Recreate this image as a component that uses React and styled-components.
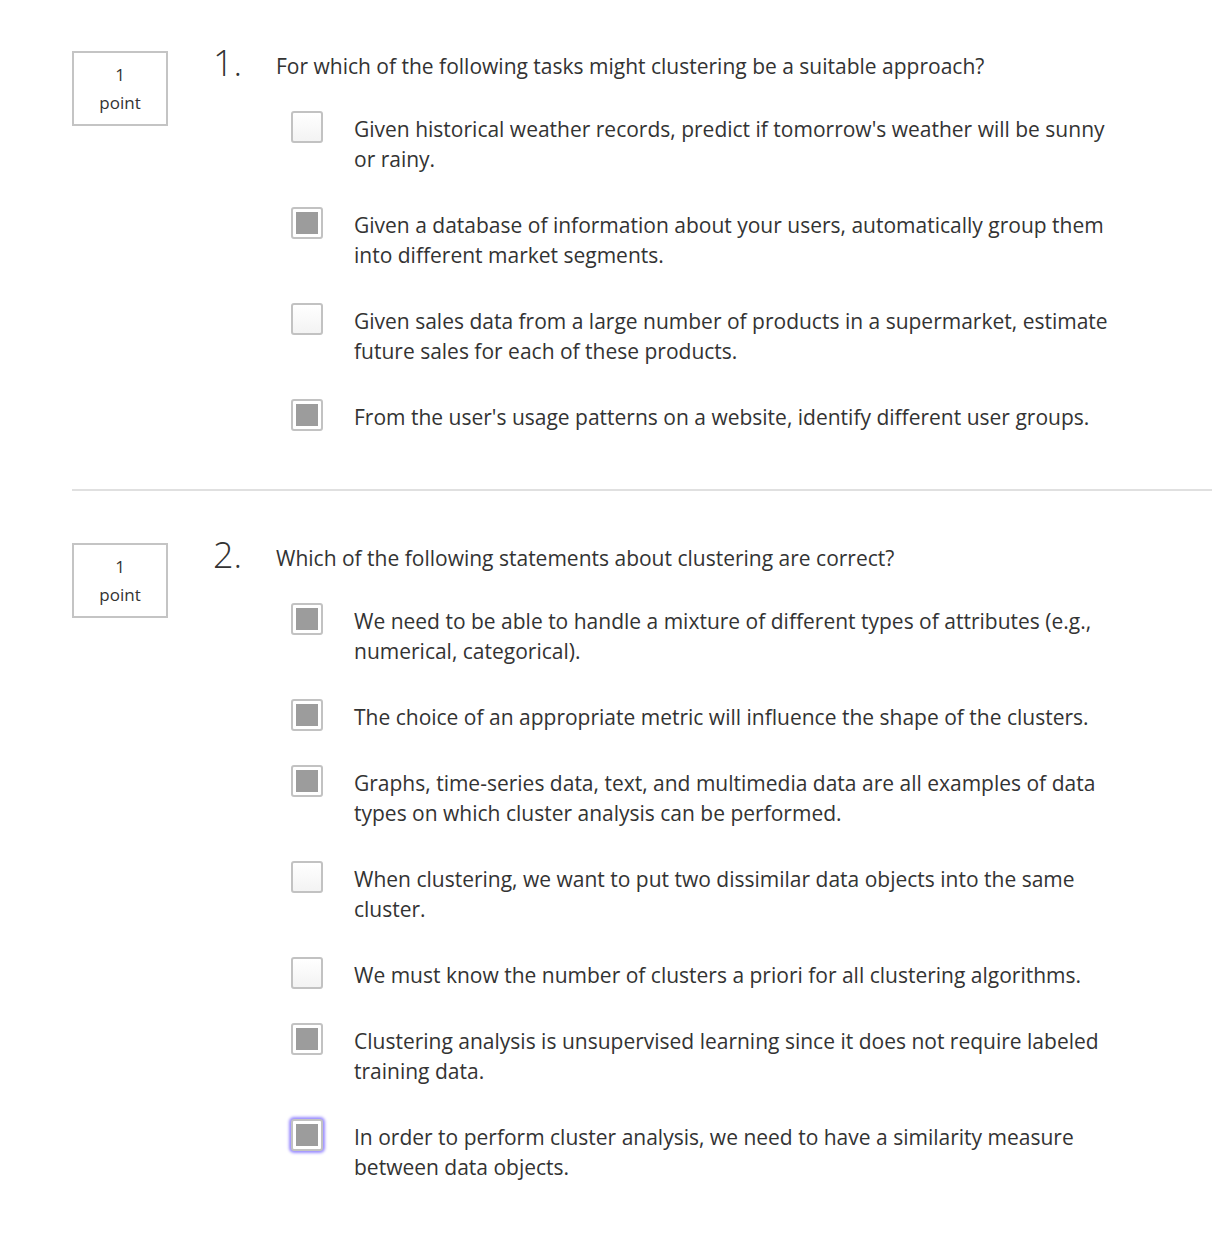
import styled, { createGlobalStyle } from "styled-components";

const GlobalStyle = createGlobalStyle`
  body {
    margin: 0;
    background: #fff;
    font-family: "Open Sans", "Noto Sans", sans-serif;
    color: #333;
  }
`;

const Page = styled.div`
  padding: 51px 6px 40px 72px;
`;

const Section = styled.section`
  display: flex;
  align-items: flex-start;
  padding-bottom: ${(p) => (p.$last ? "0" : "57px")};
  border-bottom: ${(p) => (p.$last ? "none" : "2px solid #e0e0e0")};
  margin-bottom: ${(p) => (p.$last ? "0" : "52px")};
`;

const PointBox = styled.div`
  box-sizing: border-box;
  width: 96px;
  height: 75px;
  border: 2px solid #c4c4c4;
  display: flex;
  flex-direction: column;
  align-items: center;
  justify-content: center;
  font-size: 17px;
  line-height: 28px;
  color: #333;
  flex-shrink: 0;
`;

const Number = styled.div`
  width: 63px;
  margin-left: 45px;
  font-size: 36px;
  font-weight: 300;
  line-height: 30px;
  margin-top: -3px;
  flex-shrink: 0;
`;

const Body = styled.div`
  display: flex;
  flex-direction: column;
`;

const Question = styled.div`
  font-size: 21px;
  line-height: 30px;
  margin-bottom: 30px;
`;

const Option = styled.label`
  display: flex;
  align-items: flex-start;
  margin-left: 15px;
  & + & {
    margin-top: 33px;
  }
`;

const Box = styled.span`
  box-sizing: border-box;
  width: 32px;
  height: 32px;
  border: 2px solid #c2c2c2;
  border-radius: 3px;
  background: ${(p) => (p.$checked ? "#fff" : "linear-gradient(#fff, #f3f3f3)")};
  display: flex;
  align-items: center;
  justify-content: center;
  flex-shrink: 0;
  box-shadow: ${(p) => (p.$focus ? "0 0 3px 2px #9a8cff" : "none")};
  &::after {
    content: "";
    display: ${(p) => (p.$checked ? "block" : "none")};
    width: 22px;
    height: 22px;
    background: #9c9c9c;
  }
`;

const OptionText = styled.span`
  font-size: 21px;
  line-height: 30px;
  margin-left: 31px;
  margin-top: 3px;
  width: 762px;
`;

const questions = [
  {
    n: "1.",
    q: "For which of the following tasks might clustering be a suitable approach?",
    options: [
      ["Given historical weather records, predict if tomorrow's weather will be sunny or rainy.", false],
      ["Given a database of information about your users, automatically group them into different market segments.", true],
      ["Given sales data from a large number of products in a supermarket, estimate future sales for each of these products.", false],
      ["From the user's usage patterns on a website, identify different user groups.", true],
    ],
  },
  {
    n: "2.",
    q: "Which of the following statements about clustering are correct?",
    options: [
      ["We need to be able to handle a mixture of different types of attributes (e.g., numerical, categorical).", true],
      ["The choice of an appropriate metric will influence the shape of the clusters.", true],
      ["Graphs, time-series data, text, and multimedia data are all examples of data types on which cluster analysis can be performed.", true],
      ["When clustering, we want to put two dissimilar data objects into the same cluster.", false],
      ["We must know the number of clusters a priori for all clustering algorithms.", false],
      ["Clustering analysis is unsupervised learning since it does not require labeled training data.", true],
      ["In order to perform cluster analysis, we need to have a similarity measure between data objects.", true, true],
    ],
  },
];

export default function App() {
  return (
    <Page>
      <GlobalStyle />
      {questions.map((item, i) => (
        <Section key={item.n} $last={i === questions.length - 1}>
          <PointBox>
            <span>1</span>
            <span>point</span>
          </PointBox>
          <Number>{item.n}</Number>
          <Body>
            <Question>{item.q}</Question>
            {item.options.map(([text, checked, focus]) => (
              <Option key={text}>
                <Box $checked={checked} $focus={focus} />
                <OptionText>{text}</OptionText>
              </Option>
            ))}
          </Body>
        </Section>
      ))}
    </Page>
  );
}
